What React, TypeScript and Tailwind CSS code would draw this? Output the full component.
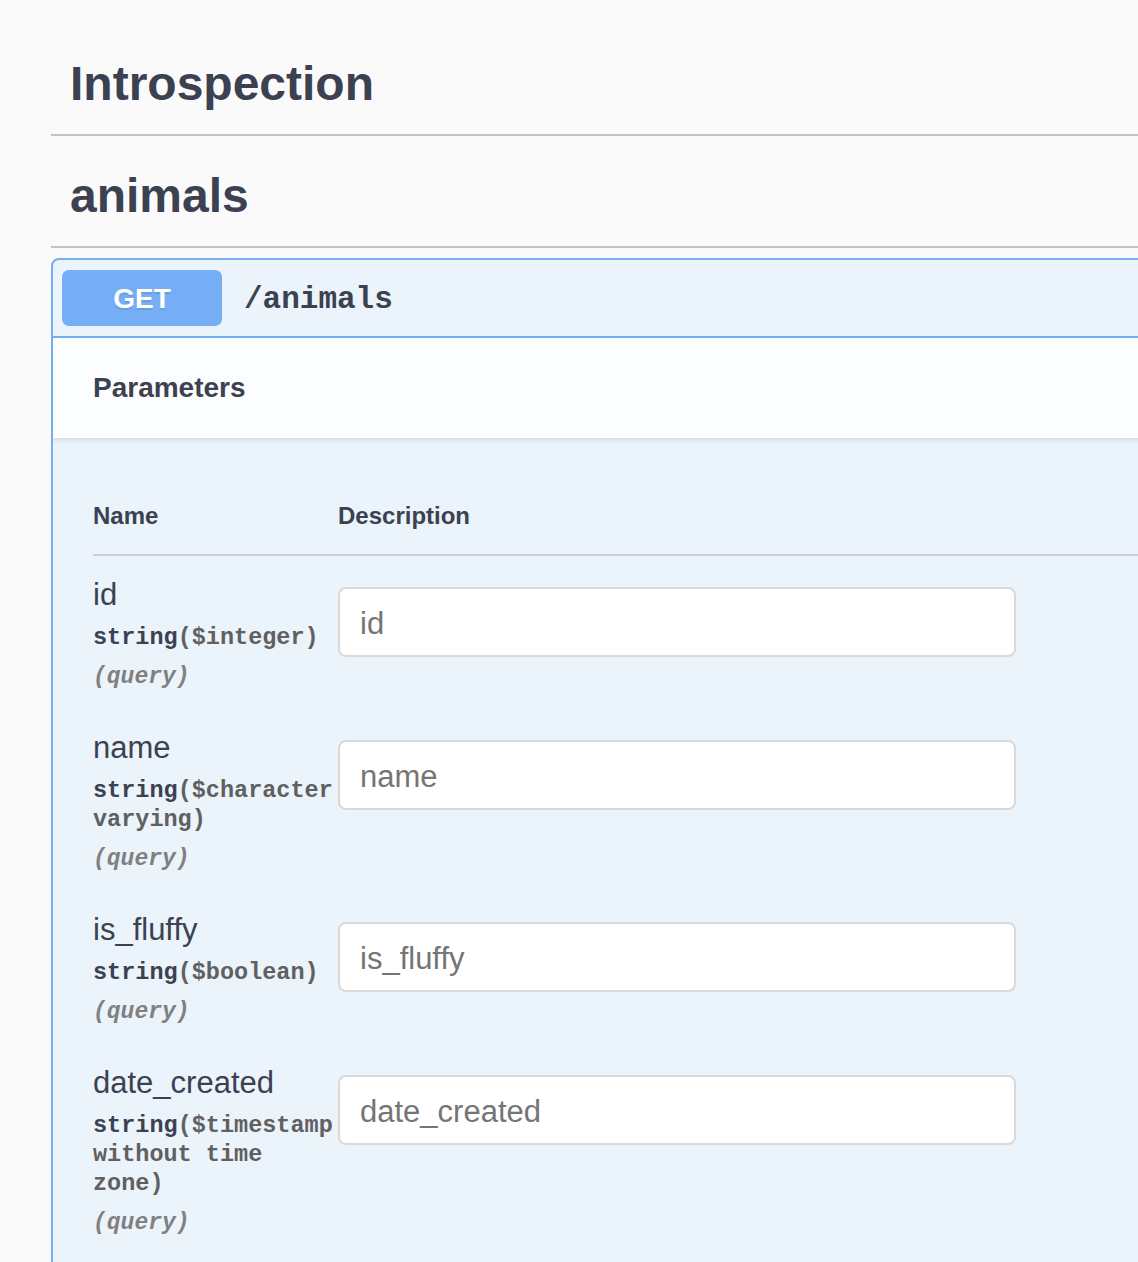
import React from "react";

type Param = {
  name: string;
  type: string;
  format: string;
};

const PARAMS: Param[] = [
  { name: "id", type: "string", format: "($integer)" },
  { name: "name", type: "string", format: "($character varying)" },
  { name: "is_fluffy", type: "string", format: "($boolean)" },
  { name: "date_created", type: "string", format: "($timestamp without time zone)" },
];

const SANS = "font-['Liberation_Sans',Arial,sans-serif]";
const MONO = "font-['Liberation_Mono','Courier_New',monospace]";

function TagHeader({ title }: { title: string }) {
  return (
    <div className="border-b-2 border-[#c1c3c7] pl-[19px] pt-[32px] pb-[22px]">
      <h2 className={`${SANS} text-[48px] leading-[56px] font-bold text-[#3b4151]`}>{title}</h2>
    </div>
  );
}

function ParamRow({ p }: { p: Param }) {
  return (
    <div className="flex py-[20px]">
      <div className="w-[245px] shrink-0">
        <div className={`${SANS} text-[31px] leading-[37px] text-[#3b4151]`}>{p.name}</div>
        <div className={`${MONO} text-[23.5px] leading-[29px] font-bold text-[#3b4151] pt-[10px] pb-[13px]`}>
          {p.type}
          <span className="text-[#606060]">{p.format}</span>
        </div>
        <div className={`${MONO} text-[23px] leading-[24px] font-bold italic text-[#808080]`}>(query)</div>
      </div>
      <div className="flex-1 pt-[11px]">
        <input
          placeholder={p.name}
          className={`${SANS} w-[678px] h-[70px] px-[20px] pt-[4px] bg-white border-2 border-[#d9d9d9] rounded-[8px] text-[31px] text-[#3b4151] placeholder:text-[#757575] outline-none`}
        />
      </div>
    </div>
  );
}

export default function App() {
  return (
    <div className="w-[1138px] h-[1262px] overflow-hidden bg-[#fafafa]">
      <div className="w-[1320px] pl-[51px] pt-[24px]">
        <TagHeader title="Introspection" />
        <TagHeader title="animals" />

        <div className="mt-[10px] border-2 border-[#76aef6] rounded-[8px] bg-[#ebf3fb] overflow-hidden">
          {/* summary */}
          <div className="flex items-center p-[10px] pl-[9px] border-b-2 border-[#76aef6]">
            <span
              className={`${SANS} w-[160px] h-[56px] flex items-center justify-center rounded-[7px] bg-[#76aef6] text-white text-[28px] font-bold pt-[2px] [text-shadow:0_2px_0_rgba(0,0,0,0.1)]`}
            >
              GET
            </span>
            <span className={`${MONO} ml-[22px] pt-[4px] text-[31px] font-bold text-[#3b4151]`}>/animals</span>
          </div>

          {/* parameters header */}
          <div className="h-[100px] flex items-center pl-[40px] bg-[#fcfdfe] shadow-[0_2px_4px_rgba(0,0,0,0.1)]">
            <h4 className={`${SANS} text-[28px] font-bold text-[#3b4151]`}>Parameters</h4>
          </div>

          {/* table */}
          <div className="p-[40px] pr-0">
            <div className="flex border-b-2 border-[#c8cfd9] py-[24px]">
              <div className={`${SANS} w-[245px] shrink-0 text-[24px] leading-[28px] font-bold text-[#3b4151]`}>Name</div>
              <div className={`${SANS} text-[24px] leading-[28px] font-bold text-[#3b4151]`}>Description</div>
            </div>
            {PARAMS.map((p) => (
              <ParamRow key={p.name} p={p} />
            ))}
          </div>
        </div>
      </div>
    </div>
  );
}
